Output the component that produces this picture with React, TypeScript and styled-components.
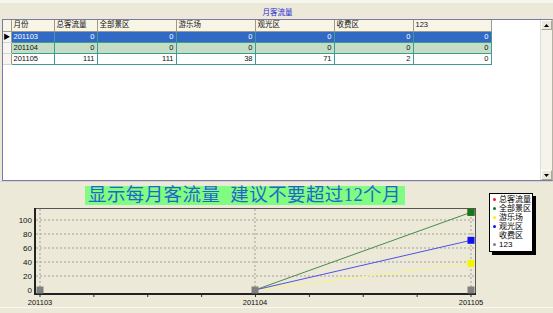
import React from "react";
import styled, { createGlobalStyle } from "styled-components";

const GlobalStyle = createGlobalStyle`
	html, body {
		margin: 0;
		padding: 0;
		background: #ece9d8;
	}
	body {
		font-family: "Liberation Sans", "Noto Sans CJK SC", sans-serif;
	}
`;

const Frame = styled.div`
	width: 553px;
	height: 313px;
	display: flex;
	flex-direction: column;
	background: #ece9d8;
	overflow: hidden;
`;

const TitleBar = styled.div`
	height: 19px;
	display: flex;
	align-items: center;
	justify-content: center;
	border-top: 3px solid #f6f5ee;
	box-sizing: border-box;
	font-size: 7.5px;
	color: #2b2bd8;
	padding-left: 2px;
`;

const GridPanel = styled.div`
	height: 162px;
	margin-left: 2px;
	display: flex;
	border: 1px solid #7b78ac;
	border-right: 1px solid #b5b3a6;
	box-sizing: border-box;
	background: #fff;
`;

const GridBody = styled.div`
	flex: 1;
	background: #fff;
`;

const Table = styled.table`
	border-collapse: collapse;
	table-layout: fixed;
	font-size: 7.5px;
	line-height: 10px;
`;

const HeadCell = styled.th<{ $w: number }>`
	width: ${(p) => p.$w}px;
	height: 11px;
	padding: 0 2px;
	box-sizing: border-box;
	background: #f8f5e6;
	border-right: 1px solid #9c9a8c;
	border-bottom: 1px solid #9c9a8c;
	font-weight: normal;
	text-align: left;
	color: #111;
	white-space: nowrap;
	overflow: hidden;
`;

const Row = styled.tr<{ $kind: "sel" | "alt" | "plain" }>`
	height: 11px;
	background: ${(p) => (p.$kind === "sel" ? "#316ac5" : p.$kind === "alt" ? "#c3dec4" : "#fff")};
	color: ${(p) => (p.$kind === "sel" ? "#fff" : "#111")};
`;

const Cell = styled.td<{ $num?: boolean }>`
	padding: 0 2px;
	border-right: 1px solid #3f9b94;
	border-bottom: 1px solid #3f9b94;
	text-align: ${(p) => (p.$num ? "right" : "left")};
	white-space: nowrap;
	overflow: hidden;
`;

const Indicator = styled.td`
	padding: 0;
	background: #f6f5ef;
	border-right: 1px solid #9c9a8c;
	border-bottom: 1px solid #d8d6cc;
	text-align: center;
	font-size: 7px;
	color: #000;
`;

const ScrollBar = styled.div`
	width: 11px;
	display: flex;
	flex-direction: column;
	justify-content: space-between;
	background: #f4f3ec;
	border-left: 1px solid #e0ded2;
`;

const ScrollButton = styled.div`
	height: 10px;
	display: flex;
	align-items: center;
	justify-content: center;
	background: #ebe9dc;
	border: 1px solid #fff;
	border-right-color: #aca899;
	border-bottom-color: #aca899;
	box-sizing: border-box;
`;

const ChartPanel = styled.div`
	flex: 1;
	display: flex;
	position: relative;
	border-top: 1px solid #d9d6c6;
`;

const ChartColumn = styled.div`
	width: 487px;
	display: flex;
	flex-direction: column;
`;

const Banner = styled.div`
	align-self: flex-start;
	margin: 4px 0 0 85px;
	height: 19px;
	padding: 0 4px 0 3px;
	background: #80fc82;
	color: #2067c8;
	font-family: "Liberation Serif", "Noto Sans CJK SC", serif;
	font-size: 18.5px;
	line-height: 19px;
	white-space: nowrap;
	letter-spacing: 0.4px;
`;

const Legend = styled.div`
	margin: 11px 0 0 2px;
	align-self: flex-start;
	width: 44px;
	padding: 1px 0 2px 3px;
	box-sizing: border-box;
	background: #fff;
	border: 1px solid #000;
	box-shadow: 3px 3px 0 #000;
	font-size: 8px;
	line-height: 9px;
`;

const LegendItem = styled.div`
	display: flex;
	align-items: center;
	gap: 3px;
	white-space: nowrap;
`;

const Dot = styled.span<{ $c: string }>`
	width: 3px;
	height: 3px;
	border-radius: 50%;
	background: ${(p) => p.$c};
	flex: none;
`;

const BottomEdge = styled.div`
	position: absolute;
	left: 0;
	right: 0;
	bottom: 5px;
	border-top: 1px solid #f8f7f1;
`;

const cols = [
	{ name: "月份", w: 43 },
	{ name: "总客流量", w: 43 },
	{ name: "全部景区", w: 79 },
	{ name: "游乐场", w: 79 },
	{ name: "观光区", w: 79 },
	{ name: "收费区", w: 79 },
	{ name: "123", w: 78 },
];

const rows: { month: string; v: number[]; kind: "sel" | "alt" | "plain" }[] = [
	{ month: "201103", v: [0, 0, 0, 0, 0, 0], kind: "sel" },
	{ month: "201104", v: [0, 0, 0, 0, 0, 0], kind: "alt" },
	{ month: "201105", v: [111, 111, 38, 71, 2, 0], kind: "plain" },
];

const series = [
	{ name: "总客流量", color: "#e8202a", line: "", v: [0, 0, 111] },
	{ name: "全部景区", color: "#0a7a1a", line: "#4a8a4a", v: [0, 0, 111] },
	{ name: "游乐场", color: "#f4f400", line: "#f6f68a", v: [0, 0, 38] },
	{ name: "观光区", color: "#1010f0", line: "#5050e8", v: [0, 0, 71] },
	{ name: "收费区", color: "transparent", line: "", v: [0, 0, 2] },
	{ name: "123", color: "#808080", line: "", v: [0, 0, 0] },
];

const catX = [40, 255, 471];
const months = ["201103", "201104", "201105"];
const yOf = (v: number) => 85 - v * 0.7;

const Chart = () => (
	<svg width={487} height={104} style={{ display: "block" }}>
		{[20, 40, 60, 80, 100].map((t) => (
			<line key={t} x1={36} x2={474} y1={yOf(t)} y2={yOf(t)} stroke="#a3a196" strokeDasharray="2 2" />
		))}
		{catX.map((x) => (
			<line key={x} x1={x} x2={x} y1={4} y2={88} stroke="#a3a196" strokeDasharray="2 2" />
		))}
		<rect x={35.5} y={3.5} width={440} height={85} fill="none" stroke="#555" strokeWidth={1} />
		<line x1={35} x2={35} y1={3} y2={90} stroke="#222" strokeWidth={2} />
		<line x1={34} x2={476} y1={89} y2={89} stroke="#222" strokeWidth={2} />
		{Array.from({ length: 9 }).map((_, i) => (
			<line key={i} x1={40 + i * 53.875} x2={40 + i * 53.875} y1={90} y2={92} stroke="#333" />
		))}
		{[0, 20, 40, 60, 80, 100].map((t) => (
			<text key={t} x={32} y={yOf(t) + 3} fontSize={8} textAnchor="end" fill="#111" fontFamily="Liberation Sans, sans-serif">
				{t}
			</text>
		))}
		{months.map((m, i) => (
			<text key={m} x={catX[i]} y={100} fontSize={7.5} textAnchor="middle" fill="#111" fontFamily="Liberation Sans, sans-serif">
				{m}
			</text>
		))}
		{series
			.filter((s) => s.line)
			.map((s) => (
				<line
					key={s.name}
					x1={catX[1]}
					y1={yOf(s.v[1])}
					x2={catX[2]}
					y2={yOf(s.v[2])}
					stroke={s.line}
					strokeWidth={1}
				/>
			))}
		{series.map((s) =>
			s.v.map((v, i) =>
				i === 2 || s.name === "123" ? (
					<rect key={s.name + i} x={catX[i] - 3.5} y={yOf(v) - 3.5} width={7} height={7} fill={s.color} />
				) : null
			)
		)}
	</svg>
);

const App = () => {
	return (
		<>
			<GlobalStyle />
			<Frame>
				<TitleBar>月客流量</TitleBar>
				<GridPanel>
					<GridBody>
						<Table>
							<thead>
								<tr>
									<HeadCell $w={8} />
									{cols.map((c) => (
										<HeadCell key={c.name} $w={c.w}>
											{c.name}
										</HeadCell>
									))}
								</tr>
							</thead>
							<tbody>
								{rows.map((r) => (
									<Row key={r.month} $kind={r.kind}>
										<Indicator>{r.kind === "sel" ? "▶" : ""}</Indicator>
										<Cell>{r.month}</Cell>
										{r.v.map((v, i) => (
											<Cell key={i} $num>
												{v}
											</Cell>
										))}
									</Row>
								))}
							</tbody>
						</Table>
					</GridBody>
					<ScrollBar>
						<ScrollButton>
							<svg width={5} height={3}>
								<path d="M0 3 L2.5 0 L5 3 Z" fill="#000" />
							</svg>
						</ScrollButton>
						<ScrollButton>
							<svg width={5} height={3}>
								<path d="M0 0 L2.5 3 L5 0 Z" fill="#000" />
							</svg>
						</ScrollButton>
					</ScrollBar>
				</GridPanel>
				<ChartPanel>
					<ChartColumn>
						<Banner>显示每月客流量&nbsp;&nbsp;建议不要超过12个月</Banner>
						<Chart />
					</ChartColumn>
					<Legend>
						{series.map((s) => (
							<LegendItem key={s.name}>
								<Dot $c={s.color} />
								{s.name}
							</LegendItem>
						))}
					</Legend>
					<BottomEdge />
				</ChartPanel>
			</Frame>
		</>
	);
};

export default App;
